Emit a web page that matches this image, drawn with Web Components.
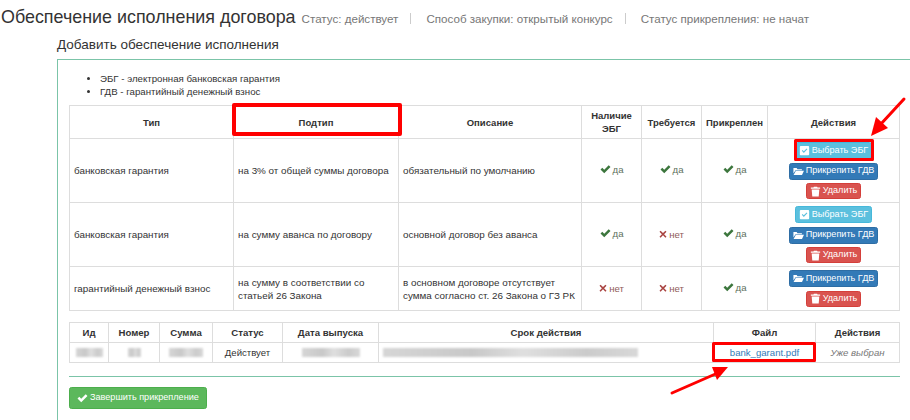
<!DOCTYPE html>
<html lang="ru">
<head>
<meta charset="utf-8">
<title>Обеспечение исполнения договора</title>
<style>
  html, body { margin: 0; background: #fff; }
  body { font-family: "Liberation Sans", Arial, sans-serif; color: #333; overflow: hidden; height: 420px; }
</style>
</head>
<body>
<contract-page></contract-page>

<script>
const ICONS = {
  ok: `<path d="M.6 6.6 2.7 4.5 5 6.8 10.3 1.5 12.4 3.6 5 11z"/>`,
  remove: `<path d="M2.6 1.2 6.5 5 10.4 1.2 12.2 3 8.3 6.9 12.2 10.8 10.4 12.6 6.5 8.7 2.6 12.6 .8 10.8 4.7 6.9 .8 3 2.6 1.2z"/>`,
  folder: `<path d="M.5 2.5h3.8l1 1.2h5.2v1.2H3L.5 8.8z"/><path d="M3.4 5.6H13L10.6 10.5H.7z"/>`,
  trash: `<path d="M4.6 .8h3.8l.5 1H12v1.4H1V1.8h3.1z"/><path d="M2 4h9l-.7 8.4H2.7z"/>`,
  check: `<path fill-rule="evenodd" d="M2.4 1.2h8.2c.8 0 1.4.6 1.4 1.4v8.2c0 .8-.6 1.4-1.4 1.4H2.4c-.8 0-1.4-.6-1.4-1.4V2.6c0-.8.6-1.4 1.4-1.4zM3.3 6.8 5.7 9.4 9.9 4.9 9 4 5.7 7.5 4.2 5.9z"/>`,
};

const icon = (name, size) =>
  `<svg width="${size}" height="${size}" viewBox="0 0 13 13" fill="currentColor" aria-hidden="true">${ICONS[name]}</svg>`;

class UiBtn extends HTMLElement {
  constructor() {
    super();
    const kind = this.getAttribute("kind") || "primary";
    const colors = {
      info: ["#5bc0de", "#46b8da"],
      primary: ["#337ab7", "#2e6da4"],
      danger: ["#d9534f", "#d43f3a"],
      success: ["#5cb85c", "#4cae4c"],
    };
    const [bg, line] = colors[kind];
    this.attachShadow({ mode: "open" }).innerHTML = `
      <style>
        :host {
          display: inline-flex;
          align-items: center;
          justify-content: center;
          gap: 2px;
          box-sizing: border-box;
          height: var(--btn-height, ${kind === "danger" ? 16 : 17}px);
          padding: 0 var(--btn-pad, 3px);
          background: ${bg};
          border: 1px solid ${line};
          border-radius: 2.5px;
          color: #fff;
          font-size: 9.1px;
          line-height: 1;
          white-space: nowrap;
        }
        svg { flex: none; }
      </style>
      ${icon(this.getAttribute("icon"), 11)}<slot></slot>`;
  }
}

class StatusMark extends HTMLElement {
  constructor() {
    super();
    const yes = this.hasAttribute("yes");
    this.attachShadow({ mode: "open" }).innerHTML = `
      <style>
        :host {
          display: inline-flex;
          align-items: center;
          gap: 2px;
          font-size: 9.6px;
          color: ${yes ? "#5c6f5d" : "#8f5a5a"};
        }
        svg { color: ${yes ? "#3c763d" : "#a94442"}; }
      </style>
      ${yes ? icon("ok", 11) : icon("remove", 8)}<span>${yes ? "да" : "нет"}</span>`;
  }
}

class BlurBlock extends HTMLElement {
  constructor() {
    super();
    this.attachShadow({ mode: "open" }).innerHTML = `
      <style>
        :host {
          display: block;
          height: 9px;
          width: ${this.getAttribute("w")}px;
          margin: 0 auto;
          background: linear-gradient(90deg, #d6d6d6, #c8c8c8 35%, #dfdfdf 55%, #cbcbcb 80%, #d8d8d8);
          filter: blur(1px);
        }
      </style>`;
  }
}

class PageHeader extends HTMLElement {
  constructor() {
    super();
    this.attachShadow({ mode: "open" }).innerHTML = `
      <style>
        :host {
          display: flex;
          align-items: baseline;
          height: 30px;
          padding: 6px 0 0 1px;
          box-sizing: border-box;
          white-space: nowrap;
        }
        h1 { margin: 0 6px 0 0; font-size: 17.9px; font-weight: 400; color: #333; line-height: 22px; }
        span { font-size: 11.6px; color: #777; }
        span + span { margin-left: 12px; padding-left: 15px; border-left: 1px solid #ccc; line-height: 11px; }
      </style>
      <h1>Обеспечение исполнения договора</h1>
      <span>Статус: действует</span>
      <span>Способ закупки: открытый конкурс</span>
      <span>Статус прикрепления: не начат</span>`;
  }
}

class GuaranteeTable extends HTMLElement {
  constructor() {
    super();
    const yes = `<status-mark yes></status-mark>`;
    const no = `<status-mark></status-mark>`;
    const pick = `<ui-btn kind="info" icon="check">Выбрать ЭБГ</ui-btn>`;
    const attach = `<ui-btn kind="primary" icon="folder">Прикрепить ГДВ</ui-btn>`;
    const del = `<ui-btn kind="danger" icon="trash">Удалить</ui-btn>`;
    const row = (h, a, b, c, d, e, f, g) => `
      <tr style="height:${h}px">
        <td>${a}</td><td>${b}</td><td>${c}</td>
        <td class="c">${d}</td><td class="c">${e}</td><td class="c">${f}</td>
        <td class="c"><div class="actions">${g}</div></td>
      </tr>`;
    this.attachShadow({ mode: "open" }).innerHTML = `
      <style>
        :host { display: block; width: 830px; }
        table { border-collapse: collapse; table-layout: fixed; width: 830px; font-size: 9.85px; color: #333; }
        th, td { border: 1px solid #ddd; padding: 0 4px; line-height: 13px; vertical-align: middle; }
        th { text-align: center; font-weight: 700; font-size: 9.5px; padding: 0 1px; }
        .c { text-align: center; }
        .actions { display: flex; flex-direction: column; align-items: center; gap: 3.5px; }
      </style>
      <table>
        <colgroup>
          <col style="width:164px"><col style="width:165px"><col style="width:183px">
          <col style="width:60px"><col style="width:60px"><col style="width:66px"><col style="width:132px">
        </colgroup>
        <tr style="height:33px">
          <th>Тип</th><th>Подтип</th><th>Описание</th><th>Наличие<br>ЭБГ</th>
          <th>Требуется</th><th>Прикреплен</th><th>Действия</th>
        </tr>
        ${row(64, "банковская гарантия", "на 3% от общей суммы договора", "обязательный по умолчанию", yes, yes, yes, pick + attach + del)}
        ${row(64, "банковская гарантия", "на сумму аванса по договору", "основной договор без аванса", yes, no, yes, pick + attach + del)}
        ${row(44, "гарантийный денежный взнос", "на сумму в соответствии со статьей 26 Закона", "в основном договоре отсутствует сумма согласно ст. 26 Закона о ГЗ РК", no, no, yes, attach + del)}
      </table>`;
  }
}

class IssuedTable extends HTMLElement {
  constructor() {
    super();
    this.attachShadow({ mode: "open" }).innerHTML = `
      <style>
        :host { display: block; width: 830px; }
        table { border-collapse: collapse; table-layout: fixed; width: 830px; font-size: 9.6px; color: #333; }
        th, td { border: 1px solid #ddd; padding: 0 3px; text-align: center; height: 19px; line-height: 13px; }
        th { font-size: 9.6px; font-weight: 700; }
        a { color: #337ab7; text-decoration: none; }
        em { color: #777; }
      </style>
      <table>
        <colgroup>
          <col style="width:39px"><col style="width:51px"><col style="width:53px"><col style="width:70px">
          <col style="width:96px"><col style="width:335px"><col style="width:102px"><col style="width:84px">
        </colgroup>
        <tr><th>Ид</th><th>Номер</th><th>Сумма</th><th>Статус</th><th>Дата выпуска</th><th>Срок действия</th><th>Файл</th><th>Действия</th></tr>
        <tr>
          <td><blur-block w="27"></blur-block></td>
          <td><blur-block w="13"></blur-block></td>
          <td><blur-block w="34"></blur-block></td>
          <td>Действует</td>
          <td><blur-block w="58"></blur-block></td>
          <td><blur-block w="255" style="margin:0 0 0 1px"></blur-block></td>
          <td><a>bank_garant.pdf</a></td>
          <td><em>Уже выбран</em></td>
        </tr>
      </table>`;
  }
}

class AttachPanel extends HTMLElement {
  constructor() {
    super();
    this.attachShadow({ mode: "open" }).innerHTML = `
      <style>
        :host { display: block; margin-left: 57px; }
        h4 { margin: 0; height: 29px; font-size: 13.5px; font-weight: 400; line-height: 29px; color: #333; white-space: nowrap; }
        .box {
          border-top: 1px solid #7bc4a8;
          border-left: 1px solid #7bc4a8;
          height: 361px;
          box-sizing: border-box;
          padding: 12px 0 0 11px;
        }
        ul { margin: 0; padding: 0 0 0 31px; height: 33px; font-size: 9.7px; line-height: 13px; color: #333; }
        hr { width: 831px; margin: 13px 0 10px; border: 0; border-top: 1px solid #7bc4a8; }
        issued-table { margin-top: 11px; }
        ui-btn { --btn-height: 22px; --btn-pad: 7px; }
      </style>
      <h4>Добавить обеспечение исполнения</h4>
      <div class="box">
        <ul>
          <li>ЭБГ - электронная банковская гарантия</li>
          <li>ГДВ - гарантийный денежный взнос</li>
        </ul>
        <guarantee-table></guarantee-table>
        <issued-table></issued-table>
        <hr>
        <ui-btn kind="success" icon="ok">Завершить прикрепление</ui-btn>
      </div>`;
  }
}

// red marks painted over the screenshot
class MarkupLayer extends HTMLElement {
  constructor() {
    super();
    this.attachShadow({ mode: "open" }).innerHTML = `
      <style>
        :host { position: absolute; left: 0; top: 0; pointer-events: none; }
        svg { display: block; }
      </style>
      <svg width="910" height="420" fill="none">
        <g stroke="#f00" stroke-width="4" stroke-linejoin="round">
          <rect x="234" y="105" width="166" height="29"/>
        </g>
        <g stroke="#f00" stroke-width="3" stroke-linejoin="round">
          <rect x="795.5" y="140.5" width="77" height="19"/>
          <rect x="713.5" y="343.5" width="101" height="17"/>
        </g>
        <g stroke="#f00" stroke-width="3" stroke-linecap="round">
          <path d="M904 99 880 125"/>
          <path d="M672 393 720 372"/>
        </g>
        <g fill="#f00">
          <path d="M871 136 876 117 888 128z"/>
          <path d="M712 367 728 367 717 380z"/>
        </g>
      </svg>`;
  }
}

class ContractPage extends HTMLElement {
  constructor() {
    super();
    this.attachShadow({ mode: "open" }).innerHTML = `
      <style>
        :host { display: block; position: relative; width: 910px; height: 420px; overflow: hidden; }
      </style>
      <page-header></page-header>
      <attach-panel></attach-panel>
      <markup-layer></markup-layer>`;
  }
}

customElements.define("ui-btn", UiBtn);
customElements.define("status-mark", StatusMark);
customElements.define("blur-block", BlurBlock);
customElements.define("page-header", PageHeader);
customElements.define("guarantee-table", GuaranteeTable);
customElements.define("issued-table", IssuedTable);
customElements.define("attach-panel", AttachPanel);
customElements.define("markup-layer", MarkupLayer);
customElements.define("contract-page", ContractPage);
</script>
</body>
</html>
